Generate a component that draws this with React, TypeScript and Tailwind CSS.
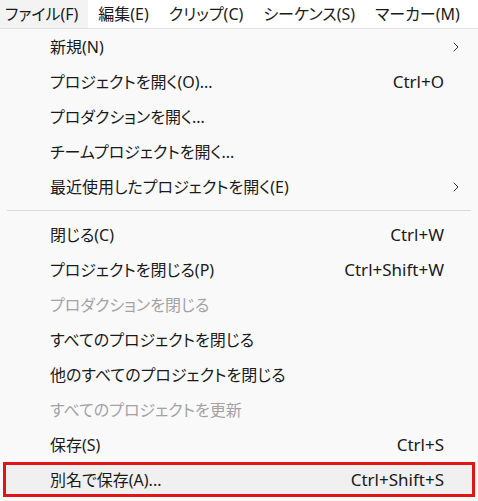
import { ChevronRight } from "lucide-react";

type Item =
    | { sep: true }
    | { sep?: false; label: string; shortcut?: string; sub?: boolean; disabled?: boolean; active?: boolean };

const menuBar = ["ファイル(F)", "編集(E)", "クリップ(C)", "シーケンス(S)", "マーカー(M)"];

const items: Item[] = [
    { label: "新規(N)", sub: true },
    { label: "プロジェクトを開く(O)...", shortcut: "Ctrl+O" },
    { label: "プロダクションを開く..." },
    { label: "チームプロジェクトを開く..." },
    { label: "最近使用したプロジェクトを開く(E)", sub: true },
    { sep: true },
    { label: "閉じる(C)", shortcut: "Ctrl+W" },
    { label: "プロジェクトを閉じる(P)", shortcut: "Ctrl+Shift+W" },
    { label: "プロダクションを閉じる", disabled: true },
    { label: "すべてのプロジェクトを閉じる" },
    { label: "他のすべてのプロジェクトを閉じる" },
    { label: "すべてのプロジェクトを更新", disabled: true },
    { label: "保存(S)", shortcut: "Ctrl+S" },
    { label: "別名で保存(A)...", shortcut: "Ctrl+Shift+S", active: true },
];

const font = { fontFamily: '"Noto Sans", "Noto Sans CJK JP", sans-serif' };

export default function App() {
    return (
        <div
            className="w-[478px] h-[501px] overflow-hidden bg-[#f9f9f9] text-[16px] leading-none text-[#1a1a1a] whitespace-nowrap [font-feature-settings:'palt']"
            style={font}
        >
            {/* Menu bar */}
            <div className="flex h-[29px] bg-white border-b border-[#e0e0e0]">
                {menuBar.map((m, i) => (
                    <div
                        key={m}
                        className={
                            i === 0
                                ? "flex items-center h-full pl-[5px] pr-[10px] bg-[#f3f3f3]"
                                : "flex items-center h-full px-[10px]"
                        }
                    >
                        {m}
                    </div>
                ))}
            </div>

            {/* Dropdown */}
            <div className="flex flex-col">
                {items.map((item, i) =>
                    item.sep ? (
                        <div key={i} className="h-[13px] flex items-center px-[7px]">
                            <div className="h-px w-full bg-[#d9d9d9]" />
                        </div>
                    ) : (
                        <div
                            key={i}
                            className={
                                item.active
                                    ? "flex items-center h-[35px] mx-[3px] pl-[44px] pr-[28px] border-[3px] border-[#e11515] bg-[#f0f0f0]"
                                    : "flex items-center h-[35px] pl-[50px] pr-[34px]"
                            }
                        >
                            <span className={item.disabled ? "flex-1 text-[#a3a3a3]" : "flex-1"}>{item.label}</span>
                            {item.shortcut && <span className="text-[17px]">{item.shortcut}</span>}
                            {item.sub && <ChevronRight className="w-4 h-4 -mr-[20px] text-[#333]" strokeWidth={1.5} />}
                        </div>
                    )
                )}
            </div>
        </div>
    );
}
